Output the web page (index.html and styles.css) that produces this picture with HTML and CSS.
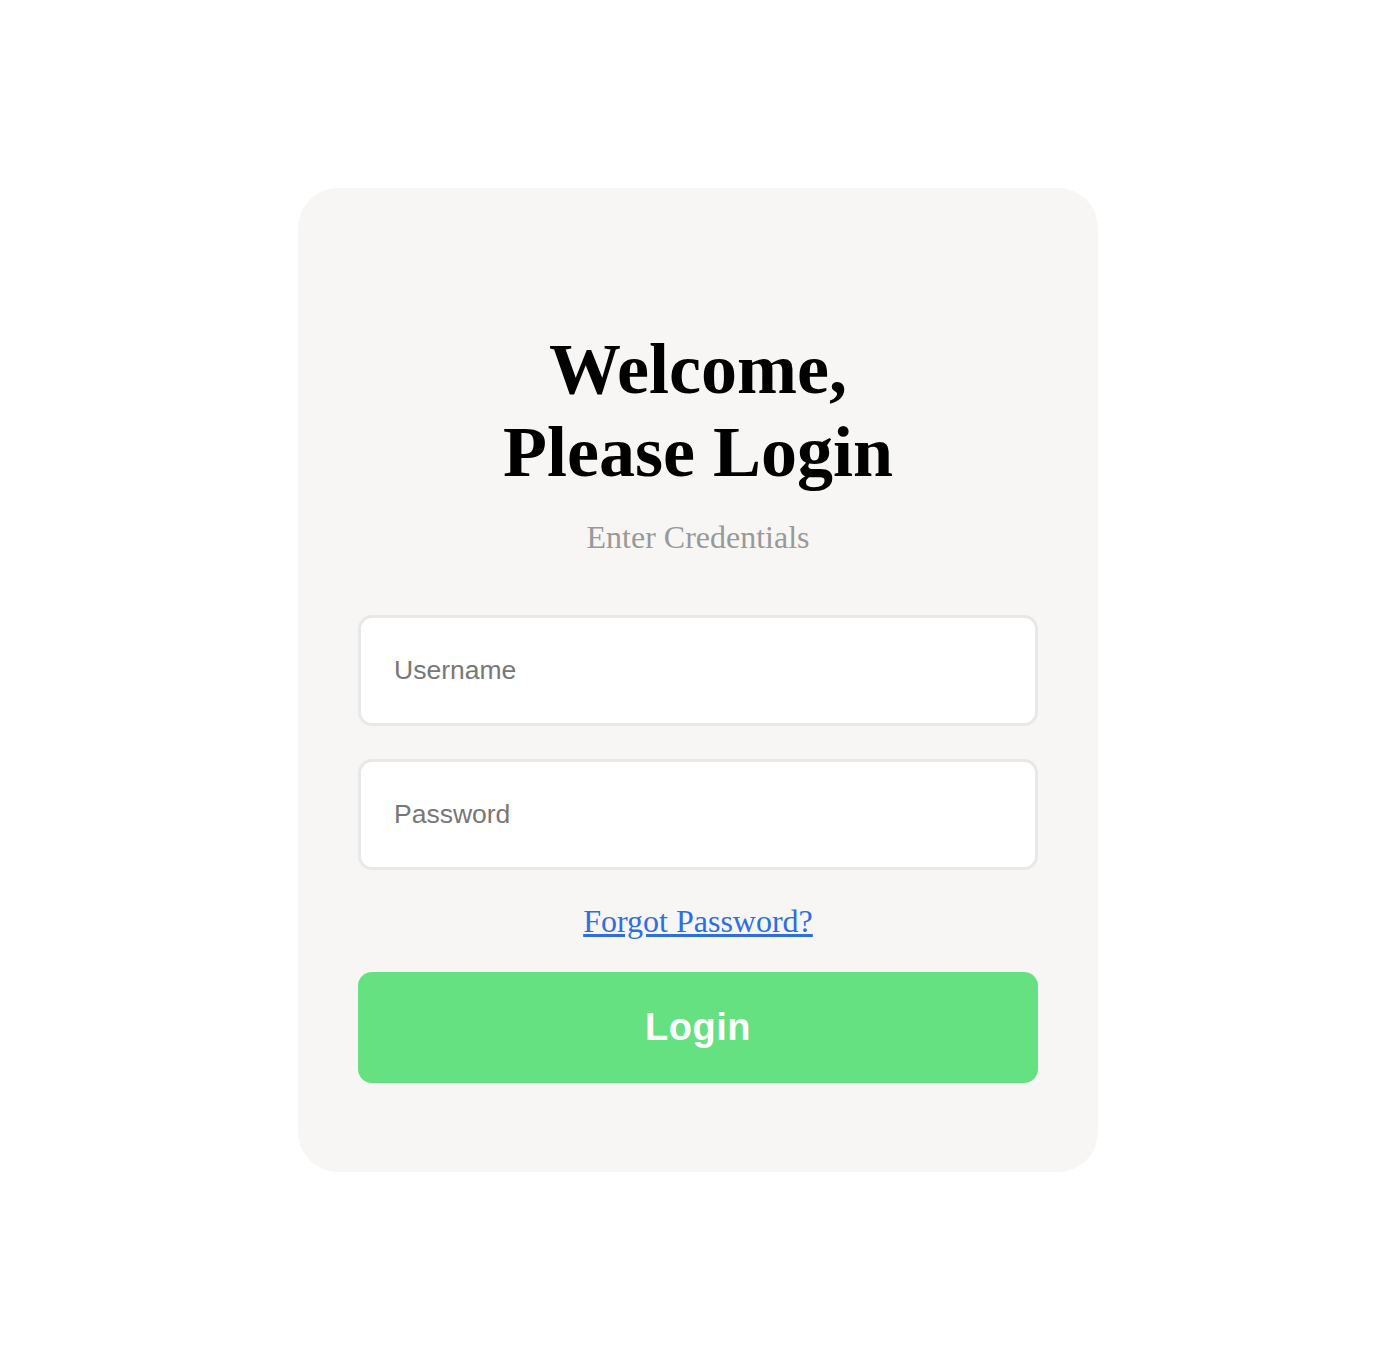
FILE: index.html
```html
<!DOCTYPE html>
<html lang="en">
<head>
<meta charset="utf-8">
<title>Login</title>
<link rel="stylesheet" href="styles.css">
</head>
<body>
<main class="page">
  <section class="card">
    <h1 class="title">Welcome,<br>Please Login</h1>
    <p class="subtitle">Enter Credentials</p>
    <form class="form">
      <input class="field" type="text" placeholder="Username">
      <input class="field" type="password" placeholder="Password">
      <a class="forgot" href="#">Forgot Password?</a>
      <button class="login" type="button">Login</button>
    </form>
  </section>
</main>
</body>
</html>
```
FILE: styles.css
```css
html, body {
  margin: 0;
  padding: 0;
  background: #ffffff;
}

.page {
  display: flex;
  justify-content: center;
  padding: 188px 0 0 18px;
}

.card {
  width: 800px;
  box-sizing: border-box;
  padding: 140px 60px 89px;
  background: #f7f6f4;
  border-radius: 40px;
  font-family: "Liberation Serif", "Times New Roman", serif;
  text-align: center;
}

.title {
  margin: 0;
  font-size: 72px;
  font-weight: 700;
  line-height: normal;
  color: #000;
}

.subtitle {
  margin: 25px 0 0;
  font-size: 32px;
  line-height: normal;
  color: #999999;
}

.form {
  display: flex;
  flex-direction: column;
  margin-top: 59px;
}

.field {
  display: block;
  width: 100%;
  height: 111px;
  box-sizing: border-box;
  margin: 0 0 33px;
  padding: 0 33px;
  border: 3px solid #e8e8e8;
  border-radius: 14px;
  background: #ffffff;
  font-family: "Liberation Sans", Arial, sans-serif;
  font-size: 26.5px;
  color: #333;
  outline: none;
}

.field:last-of-type {
  margin-bottom: 0;
}

.field::placeholder {
  color: #777777;
}

.forgot {
  align-self: center;
  margin-top: 33px;
  font-size: 32px;
  line-height: normal;
  color: #2d6ee3;
  text-decoration: underline;
}

.login {
  margin-top: 32px;
  height: 111px;
  width: 100%;
  border: none;
  border-radius: 14px;
  background: #66e182;
  color: #ffffff;
  font-family: "Liberation Sans", Arial, sans-serif;
  font-size: 38px;
  font-weight: 700;
  letter-spacing: 0.5px;
  padding: 0;
  cursor: pointer;
}
```
